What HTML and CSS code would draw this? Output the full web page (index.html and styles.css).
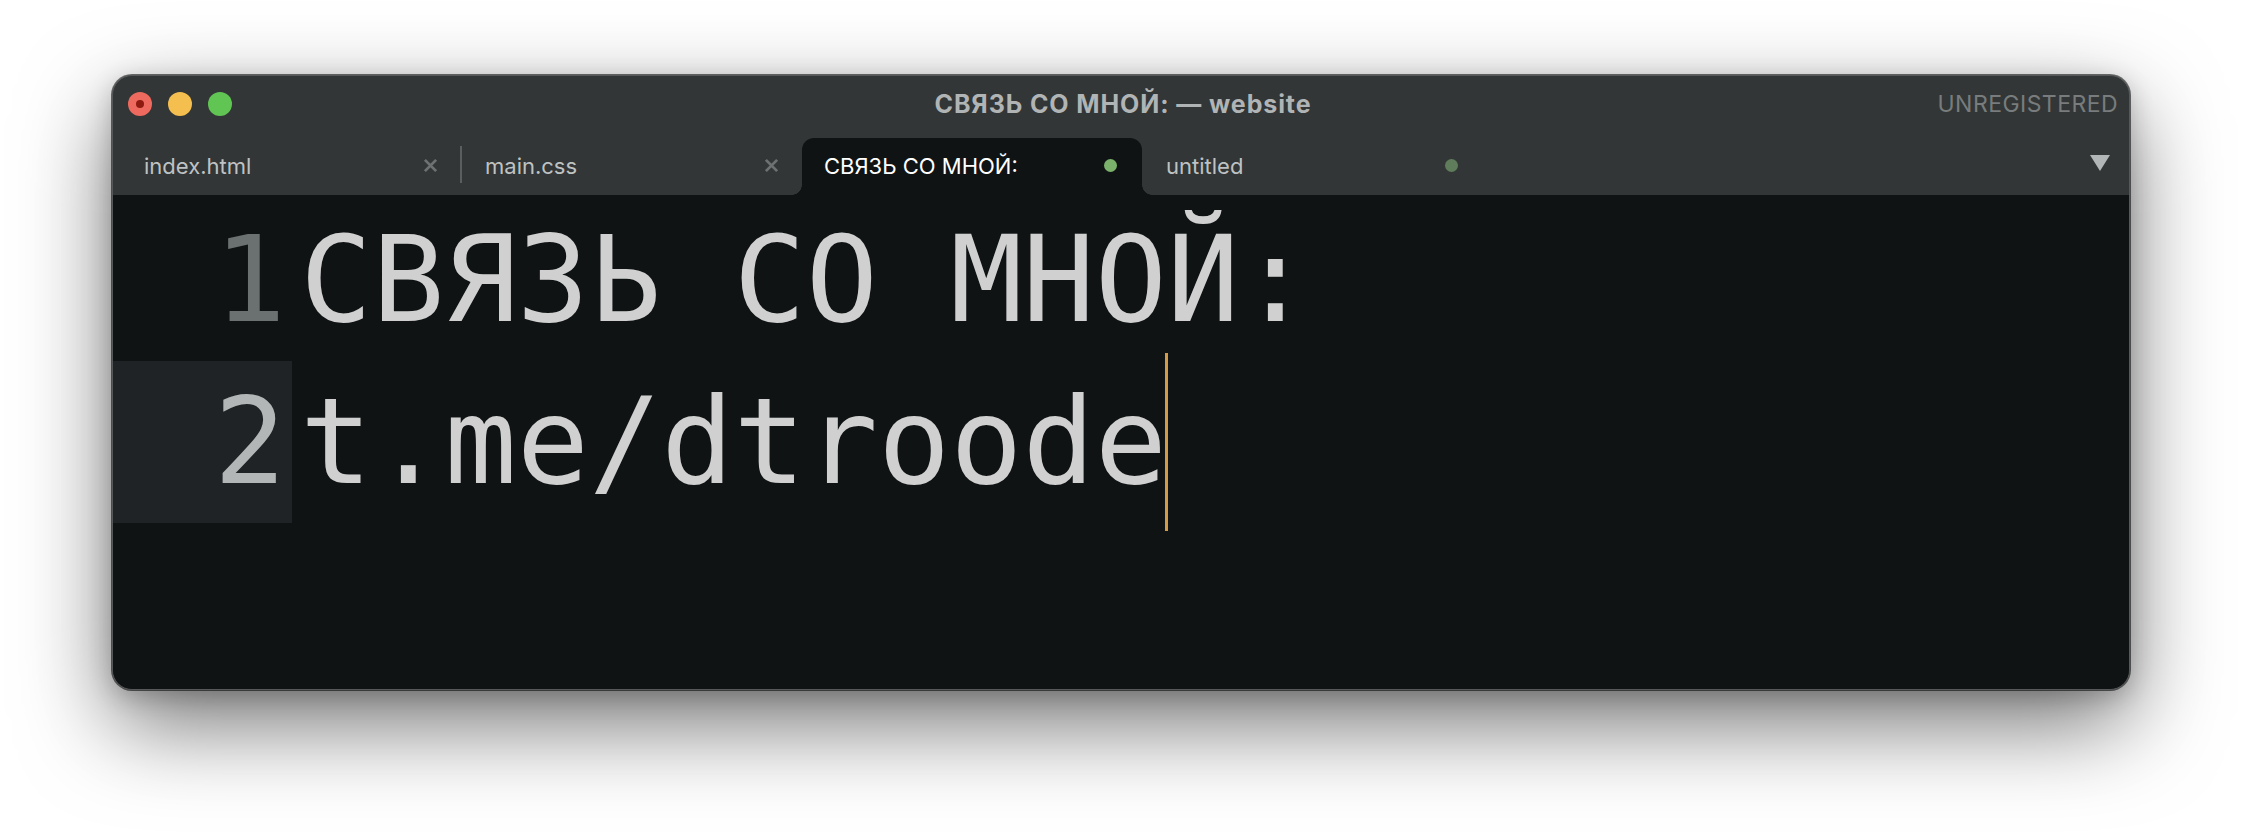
FILE: index.html
```html
<!DOCTYPE html>
<html lang="ru">
<head>
<meta charset="utf-8">
<title>СВЯЗЬ СО МНОЙ: — website</title>
<link rel="stylesheet" href="styles.css">
</head>
<body>
<div class="window">
  <div class="titlebar">
    <div class="lights">
      <span class="light red"><span class="modified"></span></span>
      <span class="light yellow"></span>
      <span class="light green"></span>
    </div>
    <div class="title">СВЯЗЬ СО МНОЙ: — website</div>
    <div class="unreg">UNREGISTERED</div>
  </div>
  <div class="tabbar">
    <div class="tab">
      <span class="tab-name">index.html</span>
      <svg class="close" viewBox="0 0 16 16" width="16" height="16"><path d="M2 2 L14 14 M14 2 L2 14" stroke="#6d7171" stroke-width="3" stroke-linecap="butt"/></svg>
    </div>
    <div class="sep"></div>
    <div class="tab">
      <span class="tab-name">main.css</span>
      <svg class="close" viewBox="0 0 16 16" width="16" height="16"><path d="M2 2 L14 14 M14 2 L2 14" stroke="#6d7171" stroke-width="3" stroke-linecap="butt"/></svg>
    </div>
    <div class="tab active">
      <span class="tab-name">СВЯЗЬ СО МНОЙ:</span>
      <span class="dirty"></span>
    </div>
    <div class="tab">
      <span class="tab-name">untitled</span>
      <span class="dirty dim"></span>
    </div>
    <div class="tab-spacer"></div>
    <svg class="tabmenu" viewBox="0 0 20 16" width="20" height="16"><path d="M0 0 H20 L10 16 Z" fill="#b3b6b6"/></svg>
  </div>
  <div class="editor">
    <div class="line">
      <div class="gutter">1</div>
      <div class="code">СВЯЗЬ СО МНОЙ:</div>
    </div>
    <div class="line current">
      <div class="gutter">2</div>
      <div class="code">t.me/dtroode<span class="caret"></span></div>
    </div>
  </div>
</div>
</body>
</html>
```
FILE: styles.css
```css
* { box-sizing: border-box; }

html, body {
  margin: 0;
  padding: 0;
  background: #ffffff;
}

body {
  width: 2242px;
  height: 838px;
  overflow: hidden;
  font-family: Inter, "Noto Sans", sans-serif;
}

.window {
  margin: 75px 0 0 112px;
  width: 2018px;
  height: 615px;
  border: 1px solid #55595a;
  border-radius: 20px;
  overflow: hidden;
  background: #323637;
  box-shadow: 0 0 0 1px rgba(0, 0, 0, 0.55), 0 34px 90px rgba(0, 0, 0, 0.55), 0 6px 24px rgba(0, 0, 0, 0.2);
  display: flex;
  flex-direction: column;
}

.titlebar {
  height: 56px;
  display: grid;
  grid-template-columns: 1fr auto 1fr;
  align-items: center;
  padding: 0 11px 0 15px;
}

.lights {
  display: flex;
  gap: 16px;
  align-items: center;
}

.light {
  width: 24px;
  height: 24px;
  border-radius: 50%;
  display: flex;
  align-items: center;
  justify-content: center;
}

.red { background: #ee6a5e; }
.yellow { background: #f5bf4f; }
.green { background: #61c554; }

.modified {
  width: 8px;
  height: 8px;
  border-radius: 50%;
  background: #8e1a10;
}

.title {
  font-weight: 700;
  font-size: 25px;
  color: #b1b4b4;
  letter-spacing: 0.9px;
}

.unreg {
  justify-self: end;
  font-size: 23px;
  color: #787c7c;
  letter-spacing: 0.45px;
}

.tabbar {
  height: 63px;
  display: flex;
  align-items: flex-end;
  padding: 0 19px 0 7px;
}

.tab {
  position: relative;
  width: 341px;
  height: 57px;
  display: flex;
  align-items: center;
  justify-content: space-between;
  padding: 0 23px 2px 24px;
  font-size: 22px;
  color: #bfc2c2;
}

.sep {
  width: 2px;
  height: 37px;
  margin: 0 -1px 12px -1px;
  background: #5a5e5f;
}

.tab.active {
  width: 340px;
  background: #0f1314;
  color: #ffffff;
  border-radius: 12px 12px 0 0;
  padding-left: 22px;
  padding-right: 25px;
}

.tab.active::before,
.tab.active::after {
  content: "";
  position: absolute;
  bottom: 0;
  width: 10px;
  height: 10px;
}

.tab.active::before {
  left: -10px;
  background: radial-gradient(circle at 0 0, transparent 9.5px, #0f1314 10px);
}

.tab.active::after {
  right: -10px;
  background: radial-gradient(circle at 100% 0, transparent 9.5px, #0f1314 10px);
}

.close {
  display: block;
  width: 15px;
  height: 15px;
}

.dirty {
  width: 13px;
  height: 13px;
  border-radius: 50%;
  background: #7bb26b;
}

.dirty.dim {
  background: #5f7d5b;
  margin-right: 2px;
}

.tab-spacer { flex: 1; }

.tabmenu {
  display: block;
  width: 20px;
  height: 16px;
  margin-bottom: 24px;
}

.editor {
  flex: 1;
  background: #0f1314;
  padding-top: 4px;
  font-family: "DejaVu Sans Mono", monospace;
  font-size: 120px;
  line-height: 162px;
  color: #d0d0d0;
}

.line {
  display: flex;
  height: 162px;
}

.gutter {
  width: 179px;
  flex: none;
  text-align: right;
  padding-right: 6px;
  color: #6b7070;
}

.line.current .gutter {
  background: #1f2325;
  color: #b3b6b6;
}

.code {
  padding-left: 8px;
  white-space: pre;
}

.caret {
  display: inline-block;
  width: 3px;
  height: 178px;
  margin: -8px -1.5px -9px -1.5px;
  vertical-align: top;
  background: #d39b48;
}
```
